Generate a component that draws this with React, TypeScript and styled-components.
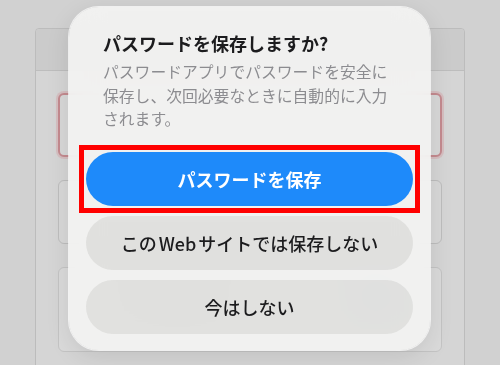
import styled, { createGlobalStyle } from "styled-components";

const GlobalStyle = createGlobalStyle`
  html, body {
    margin: 0;
    padding: 0;
    background: #d1d1d1;
    font-family: "Noto Sans CJK JP", "Noto Sans", sans-serif;
  }
  #root {
    width: 500px;
    height: 365px;
    overflow: hidden;
  }
`;

export default function App() {
  return (
    <>
      <GlobalStyle />
      <Stage>
        <Panel>
          <PanelHeader />
          <PanelBody>
            <Field $error />
            <Field />
            <OptionBox>
              <OptionLabel>
                <CheckMark />
                <SkeletonLine $w={70} />
              </OptionLabel>
              <OptionButton />
            </OptionBox>
          </PanelBody>
        </Panel>

        <Sheet>
          <Title>パスワードを保存しますか?</Title>
          <Description>
            パスワードアプリでパスワードを安全に
            <br />
            保存し、次回必要なときに自動的に入力
            <br />
            されます。
          </Description>
          <Actions>
            <Highlight>
              <ActionButton $primary>パスワードを保存</ActionButton>
            </Highlight>
            <ActionButton>この Web サイトでは保存しない</ActionButton>
            <ActionButton>今はしない</ActionButton>
          </Actions>
        </Sheet>
      </Stage>
    </>
  );
}

const Stage = styled.div`
  position: relative;
  width: 500px;
  height: 365px;
  box-sizing: border-box;
  padding: 28px 35px 0;
  overflow: hidden;
`;

const Panel = styled.div`
  width: 430px;
  height: 360px;
  box-sizing: border-box;
  border: 1px solid #bcbcbc;
  border-radius: 4px;
  background: #d5d5d5;
  display: flex;
  flex-direction: column;
`;

const PanelHeader = styled.div`
  height: 41px;
  background: #cbcbcb;
  border-bottom: 1px solid #bdbdbd;
  border-radius: 4px 4px 0 0;
`;

const PanelBody = styled.div`
  display: flex;
  flex-direction: column;
  gap: 23px;
  padding: 22px 22px 0;
`;

const Field = styled.div<{ $error?: boolean }>`
  height: 64px;
  box-sizing: border-box;
  border-radius: 6px;
  background: #d8d8d8;
  border: ${(p) => (p.$error ? "2px solid #c48a8f" : "1px solid #bdbdbd")};
  box-shadow: ${(p) => (p.$error ? "0 0 0 2px rgba(214, 150, 155, 0.35)" : "none")};
`;

const OptionBox = styled.div`
  height: 85px;
  box-sizing: border-box;
  border-radius: 6px;
  background: #dadada;
  border: 1px solid #c4c4c4;
  display: flex;
  align-items: center;
  justify-content: space-between;
  padding: 0 50px 26px 60px;
`;

const OptionLabel = styled.div`
  display: flex;
  align-items: center;
  gap: 8px;
`;

const SkeletonLine = styled.span<{ $w: number }>`
  width: ${(p) => p.$w}px;
  height: 12px;
  border-radius: 3px;
  background: #a8a8a8;
`;

const CheckMark = styled.span`
  width: 14px;
  height: 14px;
  border-radius: 3px;
  border: 1px solid #aaa;
`;

const OptionButton = styled.div`
  width: 30px;
  height: 18px;
  border-radius: 6px;
  background: #8db6ee;
`;

const Sheet = styled.div`
  position: absolute;
  left: 69px;
  top: 7px;
  width: 361px;
  height: 343px;
  box-sizing: border-box;
  padding: 24px 17px 16px;
  border-radius: 30px;
  background: rgba(243, 243, 242, 0.92);
  backdrop-filter: blur(16px);
  box-shadow: 0 0 0 1px rgba(255, 255, 255, 0.7), 0 6px 24px rgba(0, 0, 0, 0.1);
  display: flex;
  flex-direction: column;
`;

const Title = styled.div`
  padding-left: 17px;
  font-size: 18px;
  line-height: 24px;
  font-weight: 700;
  color: #1c1c1e;
`;

const Description = styled.div`
  margin-top: 5px;
  padding-left: 17px;
  font-size: 15.8px;
  line-height: 23.5px;
  color: #8c8c90;
`;

const Actions = styled.div`
  margin-top: 21px;
  display: flex;
  flex-direction: column;
  gap: 10px;
`;

const Highlight = styled.div`
  outline: 5px solid #ff0000;
  outline-offset: 2px;
`;

const ActionButton = styled.div<{ $primary?: boolean }>`
  flex-shrink: 0;
  height: 54px;
  border-radius: 27px;
  display: flex;
  align-items: center;
  justify-content: center;
  font-size: 18px;
  font-weight: ${(p) => (p.$primary ? 700 : 500)};
  color: ${(p) => (p.$primary ? "#ffffff" : "#1c1c1e")};
  background: ${(p) => (p.$primary ? "#1e8afa" : "rgba(120, 120, 110, 0.14)")};
  word-spacing: -2px;
`;
